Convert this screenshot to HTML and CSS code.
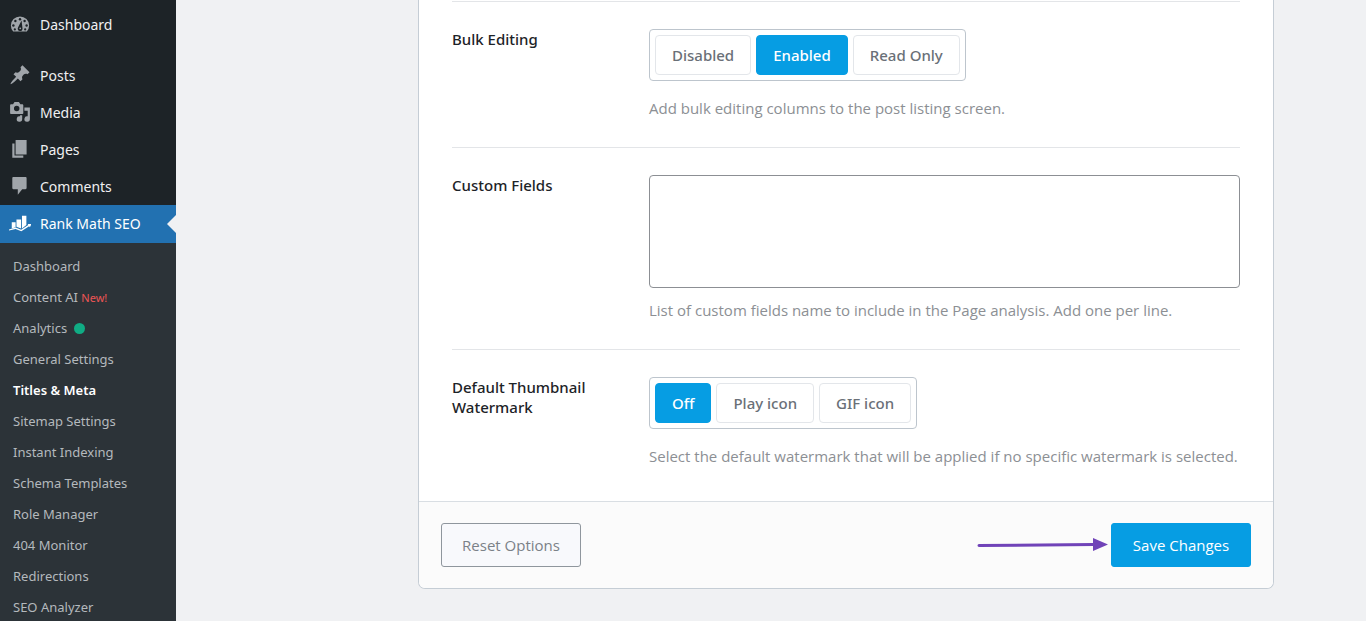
FILE: index.html
```html
<!DOCTYPE html>
<html lang="en">
<head>
<meta charset="utf-8">
<title>Titles &amp; Meta</title>
<link rel="stylesheet" href="styles.css">
</head>
<body>
<div class="layout">
  <nav class="sidebar" aria-label="Main menu">
    <ul class="menu">
      <li class="menu-item menu-item-first"><a class="menu-link" href="#"><svg class="icon" viewBox="0 0 20 20" aria-hidden="true"><path d="M3.800 16h12.400A8.200 8.200 0 0 0 18.300 10.500 8.300 8.300 0 0 0 1.700 10.500 8.200 8.200 0 0 0 3.800 16z"/><g class="icon-cut"><circle cx="10" cy="4.700" r="1.100"/><circle cx="5.800" cy="6.400" r="1.100"/><circle cx="14.200" cy="6.400" r="1.100"/><circle cx="4" cy="10.500" r="1.100"/><circle cx="16" cy="10.500" r="1.100"/><circle cx="5.300" cy="14" r="1"/><circle cx="14.700" cy="14" r="1"/><path d="M11.400 6l.8 6.600a2.200 2.200 0 1 1-3.900-.5z"/></g><circle cx="10.200" cy="13" r=".8"/></svg>Dashboard</a></li>
      <li class="menu-item"><a class="menu-link" href="#"><svg class="icon" viewBox="0 0 20 20" aria-hidden="true"><path d="M10.440 2.020l1.820-1.820 6.360 6.350-1.830 1.820c-1.050-.68-2.480-.57-3.410.36l-.75.75c-.92.93-1.040 2.350-.35 3.410l-1.830 1.820-2.410-2.410-2.800 2.790c-.42.42-3.380 2.710-3.800 2.290s1.860-3.390 2.280-3.810l2.790-2.790L4.100 8.360l1.830-1.820c1.050.69 2.480.57 3.400-.36l.75-.75c.93-.92 1.050-2.350.36-3.410z"/></svg>Posts</a></li>
      <li class="menu-item"><a class="menu-link" href="#"><svg class="icon" viewBox="0 0 20 20" aria-hidden="true"><path fill-rule="evenodd" d="M13 10V3c0-.55-.45-1-1-1h-1.670L9 0H5L3.670 2H2c-.55 0-1 .45-1 1v7c0 .55.45 1 1 1h10c.55 0 1-.45 1-1zM7 3.500a2.500 2.500 0 1 1 0 5 2.500 2.500 0 0 1 0-5zM14 5h5v10.500a2.500 2.500 0 1 1-2-2.450V8h-3zM10 13.050V12h2v3.500a2.500 2.500 0 1 1-2-2.450z"/></svg>Media</a></li>
      <li class="menu-item"><a class="menu-link" href="#"><svg class="icon" viewBox="0 0 20 20" aria-hidden="true"><path d="M6 14V1h10v13H6zm-1 1h8v2H3V4h2v11z"/></svg>Pages</a></li>
      <li class="menu-item"><a class="menu-link" href="#"><svg class="icon" viewBox="0 0 20 20" aria-hidden="true"><path d="M4 1h11c.6 0 1 .4 1 1v9c0 .6-.4 1-1 1h-3l-4 5v-5H4c-.6 0-1-.4-1-1V2c0-.6.4-1 1-1z"/></svg>Comments</a></li>
      <li class="menu-item"><a class="menu-link menu-link-current" href="#"><svg class="icon" viewBox="0 0 20 20" aria-hidden="true"><path d="M2.500 8.500H6V13l-3.500 1zM6.800 6H11v8L6.800 12.500zM11.800 2.500h4V11l-4 3z"/><path d="M0 15l6-1.800 5 2L17.500 11l-.5-1h3.500l-1.500 3-.7-.9L11.200 16.600 6 14.500 0 16z"/></svg>Rank Math SEO</a></li>
    </ul>
    <ul class="submenu">
      <li><a class="submenu-link" href="#">Dashboard</a></li>
      <li><a class="submenu-link" href="#">Content AI <span class="new-tag">New!</span></a></li>
      <li><a class="submenu-link" href="#">Analytics <span class="status-dot"></span></a></li>
      <li><a class="submenu-link" href="#">General Settings</a></li>
      <li><a class="submenu-link submenu-link-current" href="#">Titles &amp; Meta</a></li>
      <li><a class="submenu-link" href="#">Sitemap Settings</a></li>
      <li><a class="submenu-link" href="#">Instant Indexing</a></li>
      <li><a class="submenu-link" href="#">Schema Templates</a></li>
      <li><a class="submenu-link" href="#">Role Manager</a></li>
      <li><a class="submenu-link" href="#">404 Monitor</a></li>
      <li><a class="submenu-link" href="#">Redirections</a></li>
      <li><a class="submenu-link" href="#">SEO Analyzer</a></li>
    </ul>
  </nav>
  <main class="content">
    <form class="card">
      <div class="fields">
        <div class="field" role="radiogroup" aria-labelledby="bulk-title">
          <div class="field-title" id="bulk-title">Bulk Editing</div>
          <div class="field-body">
            <div class="switch">
              <input class="switch-input" type="radio" name="bulk" id="bulk-off"><label class="switch-label" for="bulk-off">Disabled</label>
              <input class="switch-input" type="radio" name="bulk" id="bulk-on" checked><label class="switch-label" for="bulk-on">Enabled</label>
              <input class="switch-input" type="radio" name="bulk" id="bulk-read"><label class="switch-label" for="bulk-read">Read Only</label>
            </div>
            <p class="help">Add bulk editing columns to the post listing screen.</p>
          </div>
        </div>
        <div class="field">
          <label class="field-title" for="custom-fields">Custom Fields</label>
          <div class="field-body">
            <textarea class="textarea" id="custom-fields"></textarea>
            <p class="help help-textarea">List of custom fields name to include in the Page analysis. Add one per line.</p>
          </div>
        </div>
        <div class="field" role="radiogroup" aria-labelledby="mark-title">
          <div class="field-title" id="mark-title">Default Thumbnail Watermark</div>
          <div class="field-body">
            <div class="switch">
              <input class="switch-input" type="radio" name="mark" id="mark-off" checked><label class="switch-label" for="mark-off">Off</label>
              <input class="switch-input" type="radio" name="mark" id="mark-play"><label class="switch-label" for="mark-play">Play icon</label>
              <input class="switch-input" type="radio" name="mark" id="mark-gif"><label class="switch-label" for="mark-gif">GIF icon</label>
            </div>
            <p class="help">Select the default watermark that will be applied if no specific watermark is selected.</p>
          </div>
        </div>
      </div>
      <footer class="actions">
        <button class="button" type="reset">Reset Options</button>
        <div class="save">
          <svg class="arrow" width="132" height="14" viewBox="0 0 132 14" aria-hidden="true"><path class="arrow-line" d="M2 7.500L117 6.500"/><path class="arrow-head" d="M116 0L131 6.500 116 13z"/></svg>
          <button class="button button-primary" type="submit">Save Changes</button>
        </div>
      </footer>
    </form>
  </main>
</div>
</body>
</html>
```

FILE: styles.css
```css
* { box-sizing: border-box; }

body {
  margin: 0;
  background: #f0f1f3;
  color: #1d2327;
  font-family: "Noto Sans", "Open Sans", sans-serif;
  font-size: 14px;
  line-height: 20px;
}

.layout { display: flex; height: 100vh; overflow: hidden; }

.sidebar { flex: none; width: 176px; background: #1d2327; }
.menu, .submenu { margin: 0; padding: 0; list-style: none; }
.menu { padding-top: 6px; }
.menu-item-first { margin-bottom: 14px; }
.menu-link {
  position: relative;
  display: flex;
  align-items: center;
  gap: 9px;
  height: 37px;
  padding-left: 9px;
  color: #f0f0f1;
  text-decoration: none;
}
.menu-link-current { height: 38px; background: #2271b1; color: #fff; }
.menu-link-current::after {
  content: "";
  position: absolute;
  top: 10px;
  right: 0;
  border: 9px solid transparent;
  border-left-width: 0;
  border-right-color: #f0f1f3;
}
.icon { width: 22px; height: 22px; fill: #a0a5aa; }
.icon-cut { fill: #1d2327; }
.menu-link-current .icon { fill: #fff; }

.submenu { padding: 8px 0; background: #2c3338; }
.submenu-link {
  display: block;
  padding: 0 13px;
  color: #b4b9bd;
  font-size: 13px;
  line-height: 31px;
  text-decoration: none;
}
.submenu-link-current { color: #fff; font-weight: 600; }
.new-tag { color: #ee5555; font-size: 11px; }
.status-dot {
  display: inline-block;
  width: 11px;
  height: 11px;
  margin-left: 3px;
  border-radius: 50%;
  background: #10ac84;
  vertical-align: -1px;
}

.content {
  flex: 1;
  min-width: 0;
  padding: 0 92px 0 242px;
  font-family: "Open Sans", "Noto Sans", sans-serif;
  font-size: 15px;
}
.card {
  border: 1px solid #c5cdd5;
  border-top: 0;
  border-radius: 0 0 7px 7px;
  background: #fff;
}
.fields { padding: 1px 33px 0; }
.field {
  display: flex;
  padding: 27px 0 29px;
  border-top: 1px solid #e3e5e8;
}
.field:last-child { padding-bottom: 35px; }
.field-title,
.switch-label {
  font-family: "Noto Sans", "Open Sans", sans-serif;
  font-weight: 500;
}
.field-title {
  flex: none;
  width: 197px;
  padding-right: 40px;
}
.field-body { flex: 1; min-width: 0; }

.switch {
  display: inline-flex;
  gap: 5px;
  padding: 5px;
  border: 1px solid #bdc5cd;
  border-radius: 4px;
  vertical-align: top;
}
.switch-input { position: absolute; opacity: 0; }
.switch-label {
  padding: 9px 16px;
  border: 1px solid #e3e6ea;
  border-radius: 4px;
  color: #6a7077;
}
.switch-input:checked + .switch-label {
  border-color: #069de3;
  background: #069de3;
  color: #fff;
}

.help { margin: 17px 0 0; color: #8c8f94; }
.help-textarea { margin-top: 12px; }
.textarea {
  display: block;
  width: 100%;
  height: 113px;
  padding: 8px;
  border: 1px solid #8c8f94;
  border-radius: 4px;
  background: #fff;
  font: inherit;
  resize: none;
}

.actions {
  display: flex;
  justify-content: space-between;
  align-items: center;
  padding: 21px 22px;
  border-top: 1px solid #d9dee3;
  border-radius: 0 0 6px 6px;
  background: #fbfbfb;
}
.button {
  min-width: 140px;
  height: 44px;
  padding: 0 16px;
  border: 1px solid #8f969d;
  border-radius: 3px;
  background: #f8f9fc;
  color: #7b8188;
  font: inherit;
}
.button-primary { border-color: #069de3; background: #069de3; color: #fff; }
.save { display: flex; align-items: center; gap: 2px; }
.arrow-line { stroke: #7043b8; stroke-width: 3; stroke-linecap: round; }
.arrow-head { fill: #7043b8; }
```
